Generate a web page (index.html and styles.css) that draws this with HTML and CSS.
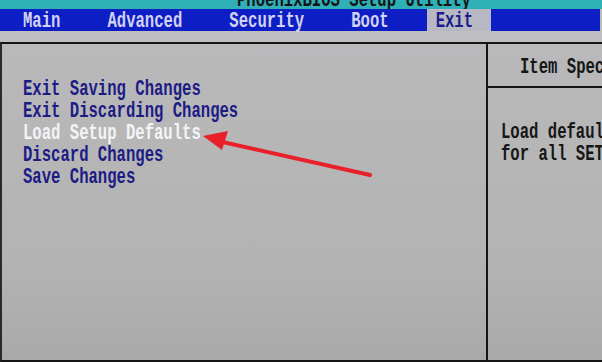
FILE: index.html
```
<!DOCTYPE html>
<html lang="en">
<head>
  <meta charset="UTF-8">
  <title>PhoenixBIOS Setup Utility</title>
  <meta name="viewport" content="width=device-width, initial-scale=1.0" />
  <link rel="stylesheet" href="styles.css">
</head>
<body>
  <div class="title"><span>PhoenixBIOS Setup Utility</span></div>
  <div class="menubar">
    <div class="tab"><span>Main</span></div>
    <div class="tab"><span>Advanced</span></div>
    <div class="tab"><span>Security</span></div>
    <div class="tab"><span>Boot</span></div>
    <div class="tab active"><span>Exit</span></div>
  </div>
  <div class="gap"></div>
  <div class="frame">
    <div class="items">
      <div class="item">Exit Saving Changes</div>
      <div class="item">Exit Discarding Changes</div>
      <div class="item selected">Load Setup Defaults</div>
      <div class="item">Discard Changes</div>
      <div class="item">Save Changes</div>
    </div>
    <div class="help">
      <div class="help-head"><span class="txt">Item Specific Help</span></div>
      <div class="help-body">
        <div class="txt">Load default configuration</div>
        <div class="txt">for all SETUP items.</div>
      </div>
    </div>
  </div>

  <!-- red pointer drawn over the screen -->
  <svg class="arrow" width="602" height="362" viewBox="0 0 602 362">
    <line x1="370" y1="175" x2="218" y2="141" stroke="#e8202a" stroke-width="4" stroke-linecap="round"/>
    <polygon points="203,136 228,131 222,150" fill="#e8202a"/>
  </svg>
</body>
</html>
```
FILE: styles.css
```
html, body {
  margin: 0;
  padding: 0;
}
body {
  width: 602px;
  height: 362px;
  overflow: hidden;
  position: relative;
  display: flex;
  flex-direction: column;
  background: #bcbcbe;
  font-family: "Liberation Mono", "DejaVu Sans Mono", monospace;
  font-weight: bold;
  font-size: 15.6px;
}
.title {
  height: 9px;
  background: #2fb0b6;
  overflow: hidden;
  white-space: nowrap;
  padding-left: 237px;
  color: #151515;
}
.title span {
  display: block;
  line-height: 14px;
  margin-top: -7px;
  transform: scaleY(1.4);
}
.menubar {
  height: 22px;
  background: #0d1ec4;
  display: flex;
  align-items: stretch;
  gap: 20px;
  padding-left: 14px;
  margin-right: 2px;
}
.tab {
  display: flex;
  align-items: center;
  padding: 2px 18px 0 9px;
  color: #d2d2f2;
}
.tab span {
  display: inline-block;
  transform: scaleY(1.4);
}
.tab.active {
  background: #b8b8c4;
  color: #1c1c8a;
}
.gap {
  height: 11px;
  background: #bfbfc1;
}
.frame {
  flex: 1;
  display: grid;
  grid-template-columns: 484px 1fr;
  border-top: 2px solid #151515;
  border-left: 2px solid #2a2a2a;
  border-bottom: 2px solid #151515;
  background: linear-gradient(#b9b9bb, #b3b3b3 70%, #a9a9a9);
}
.items {
  padding: 34px 0 0 21px;
}
.item {
  height: 22px;
  line-height: 22px;
  color: #1c1c84;
  white-space: nowrap;
  transform: scaleY(1.4);
  transform-origin: left center;
}
.item.selected {
  color: #f4f4f4;
}
.help {
  border-left: 2px solid #151515;
  overflow: hidden;
  white-space: nowrap;
  color: #161616;
}
.help-head {
  height: 39px;
  padding: 3px 0 0 32px;
  border-bottom: 2px solid #151515;
  display: flex;
  align-items: center;
}
.help-body {
  padding: 33px 0 0 13px;
}
.help-body .txt {
  height: 22px;
  line-height: 22px;
}
.txt {
  display: block;
  transform: scaleY(1.4);
  transform-origin: left center;
}
.arrow {
  position: absolute;
  left: 0;
  top: 0;
}
```
